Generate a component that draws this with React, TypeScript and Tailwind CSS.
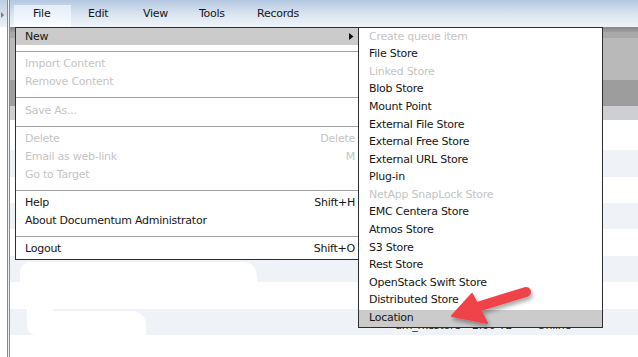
import React from "react";

type MenuEntry =
  | { kind: "item"; label: string; shortcut?: string; disabled?: boolean; highlight?: boolean; arrow?: boolean; h: string }
  | { kind: "sep"; cls: string };

const mainMenu: MenuEntry[] = [
  { kind: "item", label: "New", highlight: true, arrow: true, h: "h-[17px]" },
  { kind: "sep", cls: "mt-[6px] mb-[3px]" },
  { kind: "item", label: "Import Content", disabled: true, h: "h-[17px]" },
  { kind: "item", label: "Remove Content", disabled: true, h: "h-[18px]" },
  { kind: "sep", cls: "mt-[7px] mb-[3px]" },
  { kind: "item", label: "Save As...", disabled: true, h: "h-[18px]" },
  { kind: "sep", cls: "mt-[7px] mb-[2px]" },
  { kind: "item", label: "Delete", shortcut: "Delete", disabled: true, h: "h-[18px]" },
  { kind: "item", label: "Email as web-link", shortcut: "M", disabled: true, h: "h-[18px]" },
  { kind: "item", label: "Go to Target", disabled: true, h: "h-[18px]" },
  { kind: "sep", cls: "mt-[7px] mb-[2px]" },
  { kind: "item", label: "Help", shortcut: "Shift+H", h: "h-[18px]" },
  { kind: "item", label: "About Documentum Administrator", h: "h-[18px]" },
  { kind: "sep", cls: "mt-[7px] mb-[2px]" },
  { kind: "item", label: "Logout", shortcut: "Shift+O", h: "h-[18px]" },
];

const subMenu: { label: string; disabled?: boolean; highlight?: boolean }[] = [
  { label: "Create queue item", disabled: true },
  { label: "File Store" },
  { label: "Linked Store", disabled: true },
  { label: "Blob Store" },
  { label: "Mount Point" },
  { label: "External File Store" },
  { label: "External Free Store" },
  { label: "External URL Store" },
  { label: "Plug-in" },
  { label: "NetApp SnapLock Store", disabled: true },
  { label: "EMC Centera Store" },
  { label: "Atmos Store" },
  { label: "S3 Store" },
  { label: "Rest Store" },
  { label: "OpenStack Swift Store" },
  { label: "Distributed Store" },
  { label: "Location", highlight: true },
];

export default function App() {
  return (
    <div className="relative w-[638px] h-[357px] overflow-hidden bg-white flex font-['DejaVu_Sans',sans-serif] text-[11px] tracking-[-0.25px] text-[#161616]">
      {/* left strip */}
      <div className="flex h-full shrink-0">
        <div className="w-[7px] h-full flex flex-col">
          <div className="h-[27px] bg-gradient-to-b from-[#bccde3] to-[#eef2f8] pt-[12px]">
            <svg width="4" height="6" viewBox="0 0 4 6" className="ml-[1px]">
              <path d="M0 0 L3 3 L0 6 Z" fill="#7a7a7a" />
            </svg>
          </div>
          <div className="flex-1 bg-white" />
        </div>
        <div className="w-px bg-[#8a8a8a]" />
        <div className="w-px bg-[#f2f2f2]" />
        <div className="w-px bg-[#8a8a8a]" />
      </div>

      {/* main column */}
      <div className="flex-1 flex flex-col">
        {/* top menu bar */}
        <div className="h-[27px] shrink-0 bg-gradient-to-b from-[#b4c7e1] via-[#d9e3ef] to-[#f0f4f9] flex items-end pl-[4px]">
          <div className="w-[57px] h-[22px] bg-gradient-to-b from-[#e2edf9] to-[#fbfdff] pl-[19px] leading-[18px]">File</div>
          <div className="w-[55px] h-[22px] pl-[17px] leading-[18px]">Edit</div>
          <div className="w-[56px] h-[22px] pl-[17px] leading-[18px]">View</div>
          <div className="w-[58px] h-[22px] pl-[17px] leading-[18px]">Tools</div>
          <div className="w-[60px] h-[22px] pl-[17px] leading-[18px]">Records</div>
        </div>
        {/* gray bands */}
        <div className="h-[5px] bg-gradient-to-b from-[#858585] to-[#a0a0a0]" />
        <div className="h-[6px] bg-[#a9a9a9]" />
        <div className="h-[42px] bg-[#b9b9b9]" />
        <div className="h-[26px] bg-[#9d9d9d]" />
        <div className="h-[14px] bg-[#cdcfd2]" />
        {/* rows */}
        <div className="h-[30px] bg-white" />
        <div className="h-[27px] bg-[#eff3f8]" />
        <div className="h-[26px] bg-white" />
        <div className="h-[26px] bg-[#eff3f8]" />
        <div className="h-[27px] bg-white" />
        <div className="h-[26px] bg-[#eff3f8]" />
        <div className="h-[27px] bg-white" />
        <div className="h-[26px] bg-[#eff3f8] flex items-start pt-[10px] leading-[13px] text-[#2a2a2a]">
          <div className="w-[385px]" />
          <div className="w-[77px]">um_rkestore</div>
          <div className="w-[65px]">2.00 TB</div>
          <div>Online</div>
        </div>
        <div className="flex-1 bg-white" />
      </div>

      {/* redaction blobs */}
      <div className="absolute left-[20px] top-[262px] w-[237px] h-[30px] bg-white rounded-tl-[10px] rounded-tr-[14px]" />
      <div className="absolute left-[27px] top-[300px] w-[26px] h-[35px] bg-white rounded-bl-[9px]" />
      <div className="absolute left-[45px] top-[311px] w-[101px] h-[30px] bg-white rounded-tl-[8px] rounded-tr-[14px]" />

      {/* File menu */}
      <div className="absolute left-[15px] top-[27px] w-[344px] h-[233px] bg-white border border-[#2e2e2e] flex flex-col">
        {mainMenu.map((e, i) =>
          e.kind === "sep" ? (
            <div key={i} className={`h-px bg-[#a3a3a3] ${e.cls}`} />
          ) : (
            <div
              key={i}
              className={`${e.h} flex items-center justify-between pl-[9px] pr-[3px] pt-[2px] ${e.highlight ? "bg-[#cbcbcb]" : ""} ${e.disabled ? "text-[#c4c4c4]" : ""}`}
            >
              <span>{e.label}</span>
              {e.shortcut && <span>{e.shortcut}</span>}
              {e.arrow && (
                <svg width="5" height="7" viewBox="0 0 5 7" className="mr-[1px] -mt-[2px]">
                  <path d="M0 0 L4.5 3.5 L0 7 Z" fill="#111" />
                </svg>
              )}
            </div>
          )
        )}
      </div>

      {/* New submenu */}
      <div className="absolute left-[358px] top-[27px] w-[245px] h-[301px] bg-white border border-[#2e2e2e] flex flex-col">
        {subMenu.map((s, i) => (
          <div
            key={i}
            className={`h-[17.6px] flex items-center pl-[10px] ${s.highlight ? "bg-[#cbcbcb]" : ""} ${s.disabled ? "text-[#c4c4c4]" : ""}`}
          >
            {s.label}
          </div>
        ))}
      </div>

      {/* red arrow annotation */}
      <svg className="absolute left-0 top-0 pointer-events-none" width="638" height="357" viewBox="0 0 638 357">
        <defs>
          <filter id="sh" x="-20%" y="-20%" width="140%" height="160%">
            <feDropShadow dx="1.5" dy="3" stdDeviation="2" floodColor="#000" floodOpacity="0.35" />
          </filter>
        </defs>
        <g filter="url(#sh)">
          <line x1="526" y1="292" x2="474" y2="308" stroke="#f0434a" strokeWidth="10" strokeLinecap="round" />
          <path d="M452 316 L472 294 L487 323 Z" fill="#f0434a" stroke="#f0434a" strokeWidth="2" strokeLinejoin="round" />
        </g>
      </svg>
    </div>
  );
}
